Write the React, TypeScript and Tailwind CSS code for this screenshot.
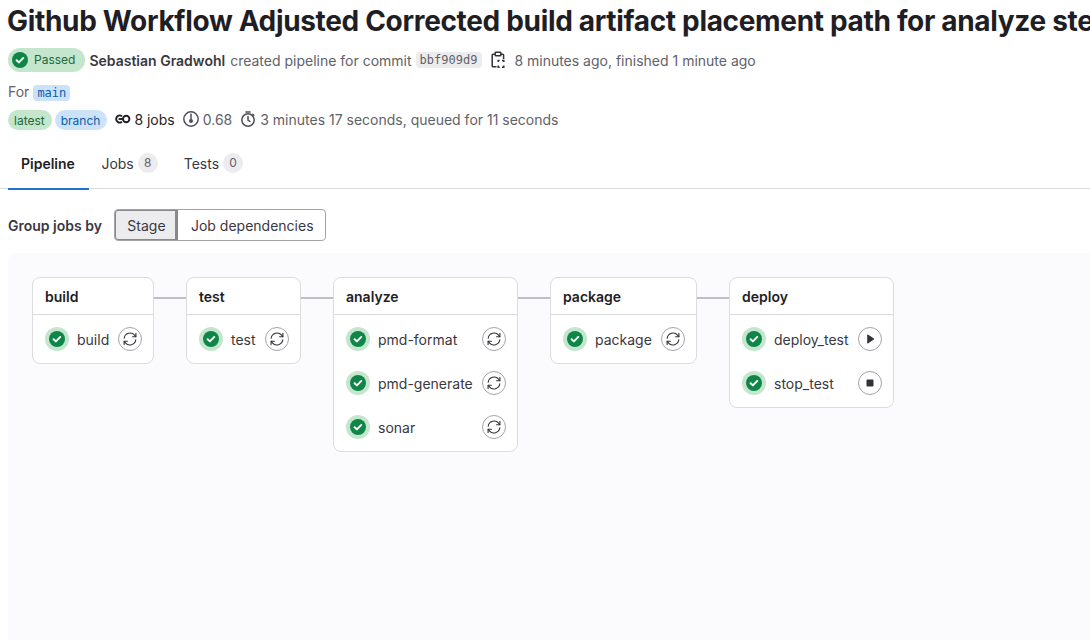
import React from "react";

const CheckBadge = ({ size = 16 }: { size?: number }) => (
  <svg width={size} height={size} viewBox="0 0 16 16" aria-hidden="true">
    <circle cx="8" cy="8" r="8" fill="#108548" />
    <path d="M4.6 8.2l2.3 2.2 4.4-4.5" fill="none" stroke="#fff" strokeWidth="1.9" strokeLinecap="round" strokeLinejoin="round" />
  </svg>
);

const Retry = () => (
  <svg width="16" height="16" viewBox="0 0 16 16" fill="none" stroke="#333238" strokeWidth="1.1" strokeLinecap="round" strokeLinejoin="round" aria-hidden="true">
    <path d="M2.2 7.2A5.9 5.9 0 0 1 12.6 4.2L13.8 5.6" />
    <path d="M13.9 2.4v3.3h-3.3" />
    <path d="M13.8 8.8A5.9 5.9 0 0 1 3.4 11.8L2.2 10.4" />
    <path d="M2.1 13.6v-3.3h3.3" />
  </svg>
);

const Play = () => (
  <svg width="16" height="16" viewBox="0 0 16 16" aria-hidden="true">
    <path d="M5.2 3.9c0-.4.4-.6.7-.4l6 4.1c.3.2.3.6 0 .8l-6 4.1c-.3.2-.7 0-.7-.4z" fill="#333238" />
  </svg>
);

const Stop = () => (
  <svg width="16" height="16" viewBox="0 0 16 16" aria-hidden="true">
    <rect x="4.5" y="4.5" width="7" height="7" rx="1" fill="#333238" />
  </svg>
);

const Clipboard = () => (
  <svg width="16" height="18" viewBox="0 0 16 18" fill="none" stroke="#333238" strokeWidth="1.5" aria-hidden="true">
    <path d="M5 3.200H3a.8.8 0 0 0-.8.8v11c0 .4.300.8.8.8h3.500" />
    <path d="M11 3.200h1.800c.4 0 .8.300.8.8v4" />
    <rect x="5.200" y="1.200" width="5.600" height="3.600" rx=".6" />
    <path d="M8.200 11v-1.500h1.500M12 9.500h1.800V11M13.800 14.500v1.800H12M9.700 16.300H8.200v-1.800" />
  </svg>
);

const Needs = () => (
  <svg width="17" height="16" viewBox="0 0 17 16" fill="none" stroke="#1f1e24" strokeWidth="1.9" aria-hidden="true">
    <path d="M7.400 4.800A3.600 3.600 0 1 0 7.400 11.200" strokeLinecap="round" />
    <circle cx="12.200" cy="8" r="3.200" />
    <path d="M4.600 8H9" />
  </svg>
);

const Coverage = () => (
  <svg width="16" height="16" viewBox="0 0 16 16" fill="none" stroke="#4f4e55" strokeWidth="1.500" aria-hidden="true">
    <circle cx="8" cy="8" r="7.200" />
    <path d="M8 3.200v6" strokeLinecap="round" />
    <circle cx="8" cy="10" r="2" fill="#4f4e55" stroke="none" />
  </svg>
);

const Timer = () => (
  <svg width="16" height="16" viewBox="0 0 16 16" fill="none" stroke="#4f4e55" strokeWidth="1.500" strokeLinecap="round" aria-hidden="true">
    <circle cx="8" cy="9" r="6.200" />
    <path d="M8 5.500V9l2 1.500M6 1h4M12.800 3.200l1 1" />
  </svg>
);

type Job = { name: string; action: "retry" | "play" | "stop" };
type Stage = { title: string; w: string; jobs: Job[] };

const stages: Stage[] = [
  { title: "build", w: "w-[122px]", jobs: [{ name: "build", action: "retry" }] },
  { title: "test", w: "w-[115px]", jobs: [{ name: "test", action: "retry" }] },
  {
    title: "analyze",
    w: "w-[185px]",
    jobs: [
      { name: "pmd-format", action: "retry" },
      { name: "pmd-generate", action: "retry" },
      { name: "sonar", action: "retry" },
    ],
  },
  { title: "package", w: "w-[147px]", jobs: [{ name: "package", action: "retry" }] },
  {
    title: "deploy",
    w: "w-[165px]",
    jobs: [
      { name: "deploy_test", action: "play" },
      { name: "stop_test", action: "stop" },
    ],
  },
];

function StageCard({ stage }: { stage: Stage }) {
  return (
    <div className={`${stage.w} shrink-0 rounded-[8px] border border-[#dcdcde] bg-white`}>
      <div className="flex h-[37px] items-center border-b border-[#dcdcde] pl-[12px] text-[14px] font-semibold text-[#1f1e24]">
        {stage.title}
      </div>
      <div className="flex flex-col gap-[8px] py-[6px] pl-[12px] pr-[11px]">
        {stage.jobs.map((job) => (
          <div key={job.name} className="flex h-[36px] items-center justify-between">
            <div className="flex items-center">
              <span className="flex h-[24px] w-[24px] items-center justify-center rounded-full bg-[#c3e6cd]">
                <CheckBadge />
              </span>
              <span className="ml-[8px] pt-[1px] text-[14px] text-[#3a383f]">{job.name}</span>
            </div>
            <span className="flex h-[24px] w-[24px] items-center justify-center rounded-full border border-[#a4a3a8] bg-white">
              {job.action === "retry" ? <Retry /> : job.action === "play" ? <Play /> : <Stop />}
            </span>
          </div>
        ))}
      </div>
    </div>
  );
}

export default function App() {
  return (
    <div className="h-[640px] w-[1090px] overflow-hidden bg-white font-['Inter',sans-serif] text-[14px] text-[#3a383f]">
      <h1 className="h-[40px] overflow-hidden whitespace-nowrap pl-[7px] pt-[3px] text-[28px] font-bold leading-[36px] tracking-[-0.33px] text-[#1f1e24]">
        Github Workflow Adjusted Corrected build artifact placement path for analyze step
      </h1>

      <div className="mt-[8px] flex h-[24px] items-center pl-[8px] text-[#626168]">
        <span className="flex h-[24px] items-center rounded-full bg-[#c3e6cd] pl-[4px] pr-[10px] text-[12px] text-[#24663b]">
          <CheckBadge />
          <span className="ml-[6px]">Passed</span>
        </span>
        <span className="ml-[4px] font-semibold text-[#3a383f]">Sebastian Gradwohl</span>
        <span className="ml-[5px]">created pipeline for commit</span>
        <span className="ml-[4px] rounded-[4px] bg-[#ececef] pl-[4px] pr-[5px] font-['DejaVu_Sans_Mono',monospace] text-[12px] leading-[16px] text-[#626168]">
          bbf909d9
        </span>
        <span className="ml-[8px] flex"><Clipboard /></span>
        <span className="ml-[8px]">8 minutes ago, finished 1 minute ago</span>
      </div>

      <div className="mt-[8px] flex h-[22px] items-center pl-[8px] text-[#626168]">
        <span>For</span>
        <span className="ml-[4px] mt-[3px] rounded-[4px] bg-[#cbe2f9] px-[4px] font-['DejaVu_Sans_Mono',monospace] text-[12px] leading-[16px] text-[#0b5cad]">
          main
        </span>
      </div>

      <div className="mt-[6px] flex h-[22px] items-center pl-[8px] text-[#626168]">
        <span className="mt-[2px] flex h-[20px] items-center rounded-full bg-[#c3e6cd] pl-[6px] pr-[7px] pt-[1px] text-[12px] text-[#24663b]">latest</span>
        <span className="ml-[3px] mt-[2px] flex h-[20px] items-center rounded-full bg-[#cbe2f9] pl-[6px] pr-[7px] pt-[1px] text-[12px] text-[#0b5cad]">branch</span>
        <span className="ml-[7px] flex items-center text-[#1f1e24]">
          <Needs />
          <span className="ml-[3px]">8 jobs</span>
        </span>
        <span className="ml-[8px] flex items-center">
          <Coverage />
          <span className="ml-[4px]">0.68</span>
        </span>
        <span className="ml-[8px] flex items-center">
          <Timer />
          <span className="ml-[4px]">3 minutes 17 seconds, queued for 11 seconds</span>
        </span>
      </div>

      <div className="mt-[11px] flex h-[48px] border-b border-[#dcdcde] pl-[8px]">
        <div className="-mb-px flex h-[49px] items-center border-b-2 border-[#1f75cb] pb-[2px] pl-[13px] pr-[14px] font-semibold text-[#1f1e24]">Pipeline</div>
        <div className="flex items-center pb-[3px] pl-[12.500px] pr-[13px] text-[#3a383f]">
          Jobs
          <span className="ml-[4px] flex h-[20px] min-w-[20px] items-center justify-center rounded-full bg-[#ececef] text-[12px] text-[#626168]">8</span>
        </div>
        <div className="flex items-center pb-[3px] pl-[13px] text-[#3a383f]">
          Tests
          <span className="ml-[4px] flex h-[20px] min-w-[20px] items-center justify-center rounded-full bg-[#ececef] text-[12px] text-[#626168]">0</span>
        </div>
      </div>

      <div className="mt-[20px] flex h-[32px] items-center pl-[8px]">
        <span className="font-semibold text-[#3a383f]">Group jobs by</span>
        <div className="ml-[12px] flex h-[32px] rounded-[4px] border border-[#a4a3a8]">
          <span className="flex w-[63px] items-center justify-center rounded-l-[3px] border-r-2 border-[#89888d] bg-[#ececef] pl-[2px] shadow-[inset_0_0_0_1px_#89888d] text-[#3a383f]">Stage</span>
          <span className="flex items-center pl-[13px] pr-[11px] text-[#3a383f]">Job dependencies</span>
        </div>
      </div>

      <div className="ml-[8px] mt-[12px] flex h-[387px] items-start rounded-tl-[8px] bg-[#fbfafd] pl-[24px] pt-[24px]">
        {stages.map((s, i) => (
          <React.Fragment key={s.title}>
            {i > 0 && <div className="mt-[20px] h-[2px] w-[32px] shrink-0 bg-[#bfbfc3]" />}
            <StageCard stage={s} />
          </React.Fragment>
        ))}
      </div>
    </div>
  );
}
